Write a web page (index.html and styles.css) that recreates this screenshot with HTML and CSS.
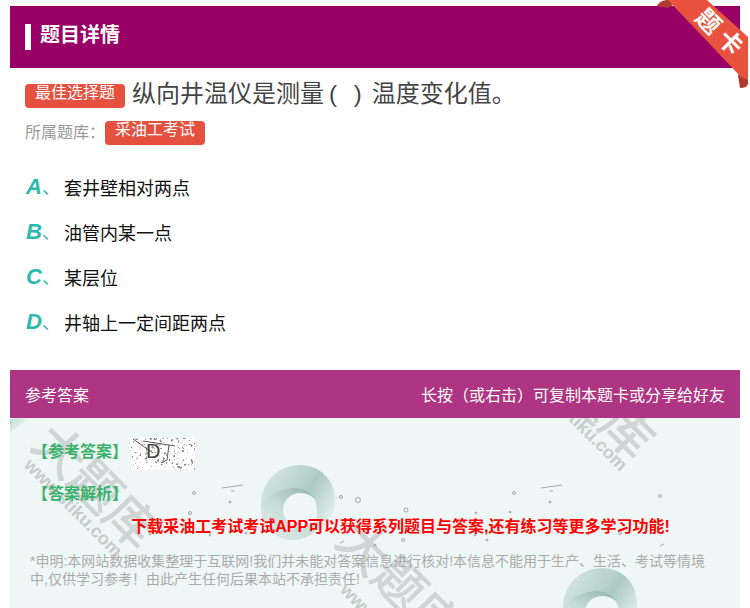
FILE: index.html
```html
<!DOCTYPE html>
<html lang="zh-CN">
<head>
<meta charset="utf-8">
<title>题目详情</title>
<link rel="stylesheet" href="styles.css">
</head>
<body>
<main class="page">
  <header class="head">
    <span class="head-bar"></span>
    <h1 class="head-title">题目详情</h1>
  </header>
  <div class="ribbon">
    <svg class="ribbon-svg" width="95" height="92" viewBox="0 0 95 92">
      <path class="fold" d="M2 6C4 2 8 0 13 0L25 0L13 8Z"/>
      <path class="fold" d="M83 75L93 70L93 84C92 87 89 88 85 88Z"/>
      <path class="band" d="M13 0L52 0L93 37L93 80L85 76Z"/>
      <text class="ribbon-text" transform="translate(39 19) rotate(45)">题</text>
      <text class="ribbon-text" transform="translate(61 40) rotate(45)">卡</text>
    </svg>
  </div>

  <section class="question">
    <div class="q-row">
      <span class="tag">最佳选择题</span>
      <span class="q-text">纵向井温仪是测量<span class="paren">( )</span>温度变化值。</span>
    </div>
    <div class="bank-row">
      <span class="bank-label">所属题库<span class="tc">：</span></span>
      <span class="tag">采油工考试</span>
    </div>
  </section>

  <ul class="options">
    <li class="option"><span class="opt-key"><b>A</b>、</span><span>套井壁相对两点</span></li>
    <li class="option"><span class="opt-key"><b>B</b>、</span><span>油管内某一点</span></li>
    <li class="option"><span class="opt-key"><b>C</b>、</span><span>某层位</span></li>
    <li class="option"><span class="opt-key"><b>D</b>、</span><span>井轴上一定间距两点</span></li>
  </ul>

  <div class="answer-head">
    <span>参考答案</span>
    <span>长按（或右击）可复制本题卡或分享给好友</span>
  </div>

  <section class="panel">
    <svg class="panel-bg" width="730" height="190" viewBox="0 0 730 190">
      <defs>
        <linearGradient id="g1" x1="0" y1="0.1" x2="1" y2="0.7">
          <stop offset="0" stop-color="#d8e9e5"/>
          <stop offset="0.45" stop-color="#b9d3cd"/>
          <stop offset="0.6" stop-color="#adc9c3"/>
          <stop offset="1" stop-color="#e4f2ef"/>
        </linearGradient>
        <linearGradient id="g2" x1="0" y1="1" x2="0.7" y2="0">
          <stop offset="0" stop-color="#e2f0ed"/>
          <stop offset="0.6" stop-color="#c6dcd7"/>
          <stop offset="1" stop-color="#9dbdb6"/>
        </linearGradient>
        <symbol id="swirl" viewBox="0 0 100 100" width="100" height="100">
          <path fill="url(#g1)" d="M16 50C16 25 35 10 55 10C75 10 90 25 90 45C90 62 80 75 65 80C70 72 72 65 72 55C72 40 60 33 50 33C35 33 22 40 16 50Z"/>
          <path fill="url(#g2)" d="M16 50C22 40 35 33 50 33C58 33 65 36 70 44C66 40 60 38 55 38C45 38 38 46 38 55C38 65 46 72 55 72C60 72 64 71 70 66C70 72 68 77 65 80C55 87 40 87 30 80C20 73 15 62 16 50Z"/>
        </symbol>
      </defs>
      <use href="#swirl" x="-67" y="-66"/>
      <use href="#swirl" x="235" y="37"/>
      <use href="#swirl" x="537" y="140"/>

      <g class="wm">
        <text class="wm-big" transform="translate(20 28) rotate(45)">大题库</text>
        <text class="wm-url" transform="translate(13 48) rotate(45)">www.stiku.com</text>
        <text class="wm-big" transform="translate(324 125) rotate(45)">大题库</text>
        <text class="wm-url" transform="translate(329 173) rotate(45)">www.stiku.com</text>
        <text class="wm-big" transform="translate(516 -62) rotate(45)">大题库</text>
        <text class="wm-url" transform="translate(518 -38) rotate(45)">www.stiku.com</text>
      </g>

      <g class="drops">
        <circle cx="184" cy="75" r="1.5"/><circle cx="220" cy="84" r="1"/><circle cx="180" cy="95" r="1.5"/>
        <circle cx="331" cy="79" r="1.5"/><circle cx="348" cy="82" r="2.5"/><circle cx="396" cy="92" r="2"/>
        <circle cx="466" cy="95" r="1"/><circle cx="504" cy="75" r="1.5"/><circle cx="540" cy="84" r="1"/>
        <circle cx="650" cy="78" r="1.5"/><circle cx="500" cy="94" r="1"/><circle cx="393" cy="122" r="1.5"/>
        <circle cx="477" cy="122" r="1"/><circle cx="365" cy="127" r="1"/><circle cx="140" cy="116" r="1"/>
        <circle cx="200" cy="117" r="1"/><circle cx="236" cy="115" r="1"/><circle cx="465" cy="117" r="1"/>
        <circle cx="610" cy="115" r="1.5"/><circle cx="578" cy="116" r="1"/>
        <path d="M212 70L233 67M221 73L224 73M531 70L552 67M540 73L543 73M330 125L334 123M650 128L654 126"/>
      </g>
    </svg>

    <div class="panel-body">
      <div class="ans-row">
        <span class="ans-label ans-first">【参考答案】</span>
        <svg class="ans-img" width="64" height="32" viewBox="0 0 64 32">
          <defs>
            <filter id="noise" x="0" y="0" width="100%" height="100%">
              <feTurbulence type="fractalNoise" baseFrequency="0.35" numOctaves="3" seed="7"/>
              <feColorMatrix values="0 0 0 0 0.25  0 0 0 0 0.25  0 0 0 0 0.25  6 6 0 0 -6.9"/>
            </filter>
          </defs>
          <rect class="img-base" width="64" height="32"/>
          <rect width="64" height="32" filter="url(#noise)"/>
          <path class="img-line" d="M2 1L22 15M12 3L44 8M38 7L36 22L30 25"/>
          <text class="img-letter" x="15" y="20">D</text>
        </svg>
      </div>
      <div class="ans-label ans-gap">【答案解析】</div>
      <p class="promo">下载采油工考试考试APP可以获得系列题目与答案,还有练习等更多学习功能!</p>
      <p class="note">*申明:本网站数据收集整理于互联网!我们并未能对答案信息进行核对!本信息不能用于生产、生活、考试等情境中,仅供学习参考<span class="tc">！</span>由此产生任何后果本站不承担责任!</p>
    </div>
  </section>
</main>
</body>
</html>
```

FILE: styles.css
```css
* { box-sizing: border-box; }
html, body { margin: 0; padding: 0; }
body {
  background: #fff;
  font-family: "Liberation Sans", "Noto Sans CJK SC", sans-serif;
  height: 608px;
  overflow: hidden;
}
.page { position: relative; width: 730px; margin: 0 10px; padding-top: 6px; }
.tc { font-family: "Noto Sans CJK TC", sans-serif; }

.head {
  display: flex;
  align-items: center;
  height: 62px;
  padding-left: 15px;
  background: #990066;
  color: #fff;
}
.head-bar { width: 6px; height: 26px; background: #fff; }
.head-title { margin: 0 0 4px 9px; font-size: 20px; font-weight: 700; line-height: 26px; }

.ribbon { position: absolute; top: 0; left: 645px; }
.ribbon-svg { display: block; overflow: visible; }
.band { fill: #e8523f; }
.fold { fill: #b03a30; }
.ribbon-text { fill: #fff; font-size: 24px; font-weight: 700; }

.question { padding: 16px 15px 0; }
.q-row { display: flex; align-items: center; height: 24px; }
.tag {
  display: block;
  flex: none;
  width: 100px;
  height: 24px;
  border-radius: 4px;
  background: #e5503f;
  color: #fff;
  font-size: 16px;
  line-height: 18px;
  text-align: center;
}
.q-text { margin: 0 0 4px 7px; color: #444; font-size: 24px; line-height: 24px; white-space: nowrap; }
.paren { margin: 0 10px 0 5px; word-spacing: 10px; }
.bank-row { display: flex; align-items: center; height: 24px; margin-top: 13px; }
.bank-label { width: 80px; margin-bottom: 2px; color: #999; font-size: 16px; line-height: 24px; white-space: nowrap; }

.options { margin: 19px 0 0; padding: 0 0 0 16px; list-style: none; }
.option { display: flex; align-items: center; height: 45px; color: #111; font-size: 18px; }
.opt-key { width: 38px; color: #2cb9ae; font-size: 18px; white-space: nowrap; }
.opt-key b { font-size: 22px; font-style: italic; }

.answer-head {
  display: flex;
  justify-content: space-between;
  align-items: center;
  height: 48px;
  margin-top: 26px;
  padding: 0 15px;
  background: #ae3583;
  color: #fff;
  font-size: 16px;
}

.panel { position: relative; height: 190px; overflow: hidden; background: #eff7f6; }
.panel-bg { position: absolute; top: 0; left: 0; }
.wm-big { fill: #cfd4d4; stroke: #cfd4d4; stroke-width: 1; font-size: 50px; }
.wm-url { fill: #c6cbcb; font-size: 18px; font-weight: 700; }
.drops { fill: none; stroke: #8a9492; stroke-width: 0.8; }
.panel-body { position: relative; padding: 20px 15px 0; }
.ans-row { display: flex; align-items: center; height: 32px; }
.ans-label { width: 106px; padding-left: 7px; color: #3bb26c; font-size: 16px; font-weight: 700; line-height: 26px; white-space: nowrap; }
.ans-first { margin-bottom: 4px; }
.ans-img { flex: none; display: block; }
.img-base { fill: #fff; }
.img-line { fill: none; stroke: #444; stroke-width: 0.9; }
.img-letter { fill: #444; font-size: 20px; }
.ans-gap { margin-top: 11px; }
.promo {
  margin: 7px 0 0;
  padding-left: 51px;
  color: #f00;
  font-size: 16px;
  font-weight: 700;
  line-height: 26px;
  text-align: center;
}
.note { margin: 13px 0 0; padding: 0 15px 0 5px; color: #aaa; font-size: 14px; line-height: 17px; }
```
